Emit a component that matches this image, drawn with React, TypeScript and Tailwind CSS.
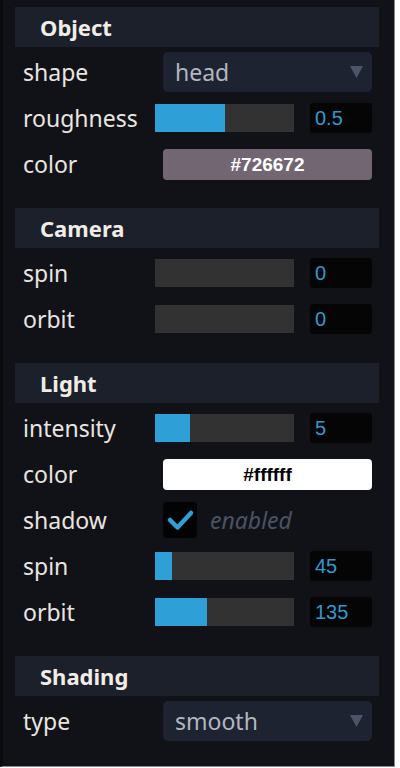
import type { ReactNode } from 'react';

const labelFont = { fontFamily: '"Noto Sans", "Open Sans", sans-serif' };
const numFont = { fontFamily: '"Liberation Sans", Arial, sans-serif' };

function Header({ title }: { title: string }) {
  return (
    <div className="h-10 bg-[#1b202b] flex items-center pl-[25px]">
      <span className="text-[22px] font-bold text-[#f1ede6] leading-none" style={labelFont}>
        {title}
      </span>
    </div>
  );
}

function Row({ label, children }: { label: string; children: ReactNode }) {
  return (
    <div className="h-[46px] flex items-center pl-2 pr-[7px]">
      <div className="w-[132px] text-[23px] text-[#e9e6e0] leading-none" style={labelFont}>
        {label}
      </div>
      {children}
    </div>
  );
}

function Slider({ pct, value }: { pct: number; value: string }) {
  return (
    <>
      <div className="w-[139px] h-[28px] bg-[#323232] flex">
        <div className="h-full bg-[#2e9fd7]" style={{ width: `${pct}%` }} />
      </div>
      <div className="ml-4 w-[62px] h-[30px] bg-[#050505] rounded-[3px] flex items-center pl-[5px]">
        <span className="text-[20px] text-[#2f9ad1] leading-none" style={numFont}>
          {value}
        </span>
      </div>
    </>
  );
}

function Select({ value }: { value: string }) {
  return (
    <div className="ml-2 flex-1 h-10 bg-[#1e2331] rounded-[5px] flex items-center justify-between pl-3 pr-[9px]">
      <span className="text-[23px] text-[#b3b7c0] leading-none" style={labelFont}>
        {value}
      </span>
      <svg width="13" height="12" viewBox="0 0 13 12">
        <path d="M0 0 H13 L6.5 12 Z" fill="#4c5568" />
      </svg>
    </div>
  );
}

function Swatch({ color, text, dark }: { color: string; text: string; dark?: boolean }) {
  return (
    <div
      className="ml-2 flex-1 h-[31px] rounded-[4px] flex items-center justify-center"
      style={{ backgroundColor: color }}
    >
      <span
        className={`text-[19px] font-bold leading-none ${dark ? 'text-black' : 'text-white'}`}
        style={numFont}
      >
        {text}
      </span>
    </div>
  );
}

export default function App() {
  return (
    <div className="min-h-screen bg-white">
      <div className="w-[395px] h-[767px] bg-[#111217] border-l-[3px] border-l-[#0a0a0c] border-r border-b border-r-[#8a8a8a] border-b-[#8a8a8a] pt-[7px] pl-[12px] pr-[15px] flex flex-col gap-[21px]">
        {/* Object */}
        <div>
          <Header title="Object" />
          <div className="mt-[2px]">
            <Row label="shape">
              <Select value="head" />
            </Row>
            <Row label="roughness">
              <Slider pct={50} value="0.5" />
            </Row>
            <Row label="color">
              <Swatch color="#726672" text="#726672" />
            </Row>
          </div>
        </div>

        {/* Camera */}
        <div>
          <Header title="Camera" />
          <div className="mt-[2px]">
            <Row label="spin">
              <Slider pct={0} value="0" />
            </Row>
            <Row label="orbit">
              <Slider pct={0} value="0" />
            </Row>
          </div>
        </div>

        {/* Light */}
        <div>
          <Header title="Light" />
          <div className="mt-[2px]">
            <Row label="intensity">
              <Slider pct={25} value="5" />
            </Row>
            <Row label="color">
              <Swatch color="#ffffff" text="#ffffff" dark />
            </Row>
            <Row label="shadow">
              <div className="ml-2 w-[34px] h-[36px] bg-[#030303] rounded-[4px] flex items-center justify-center">
                <svg width="34" height="36" viewBox="0 0 34 36">
                  <path
                    d="M7 18 L14.5 25.5 L28 11"
                    fill="none"
                    stroke="#2e9fd7"
                    strokeWidth="4.5"
                    strokeLinecap="round"
                    strokeLinejoin="round"
                  />
                </svg>
              </div>
              <span className="ml-[13px] text-[23px] italic text-[#4a5265] leading-none" style={labelFont}>
                enabled
              </span>
            </Row>
            <Row label="spin">
              <Slider pct={12.5} value="45" />
            </Row>
            <Row label="orbit">
              <Slider pct={37.5} value="135" />
            </Row>
          </div>
        </div>

        {/* Shading */}
        <div>
          <Header title="Shading" />
          <div className="mt-[2px]">
            <Row label="type">
              <Select value="smooth" />
            </Row>
          </div>
        </div>
      </div>
    </div>
  );
}
